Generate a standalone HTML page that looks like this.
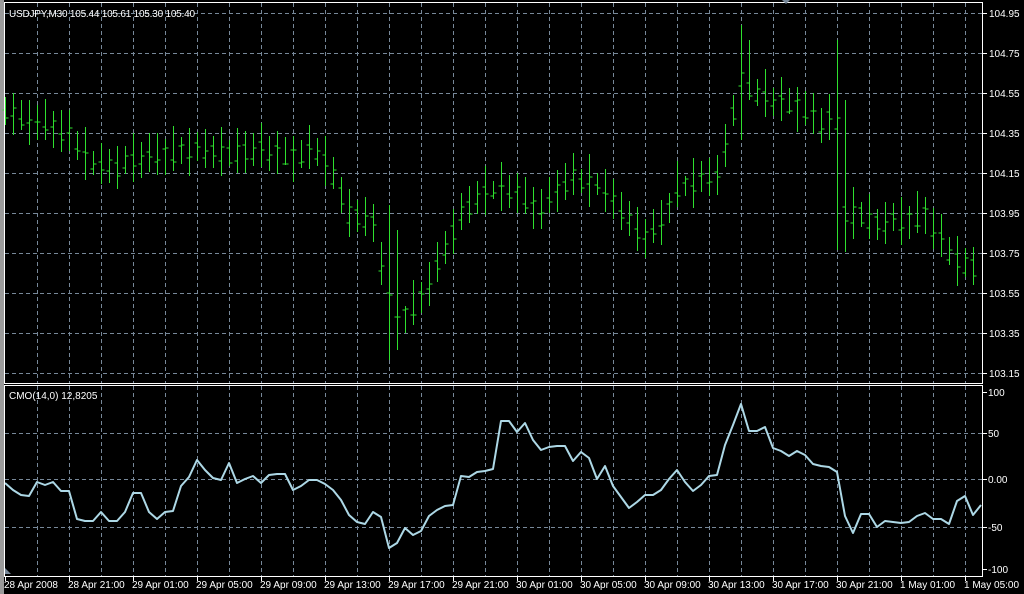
<!DOCTYPE html>
<html><head><meta charset="utf-8"><style>
html,body{margin:0;padding:0;background:#000;width:1024px;height:594px;overflow:hidden}
svg{display:block}
text{font-family:"Liberation Sans",sans-serif;font-size:10px;fill:#fff}
</style></head><body>
<svg id="s" width="1024" height="594" xmlns="http://www.w3.org/2000/svg">
<rect x="0" y="0" width="1024" height="594" fill="#000"/>
<rect x="0" y="0" width="4" height="594" fill="#9a9a9a"/>
<g id="grid" stroke="#778899" stroke-width="1" stroke-dasharray="4,3" fill="none"></g>
<g id="bars" stroke="#2ee02e" stroke-width="1" fill="none" shape-rendering="crispEdges"></g>
<polyline id="cmo" fill="none" stroke="#add8e6" stroke-width="2" stroke-linejoin="round"/>
<g stroke="#fff" stroke-width="1" fill="none">
<path d="M4.5 2.5H982.5V383.5H4.5Z"/>
<path d="M4.5 385.5H982.5V576.5H4.5Z"/>
</g>
<g id="ticks" stroke="#fff" stroke-width="1"></g>
<g id="labels"></g>
<text x="9" y="17" textLength="186">USDJPY,M30  105.44 105.61 105.30 105.40</text>
<text x="9" y="399">CMO(14,0) 12,8205</text>
<path d="M5 568L11 574H5Z" fill="#778899"/>
<path d="M782 0H790L786 4Z" fill="#778899"/>
</svg>
<script>
var NS="http://www.w3.org/2000/svg";
function el(p,t,a,txt){var e=document.createElementNS(NS,t);for(var k in a)e.setAttribute(k,a[k]);if(txt)e.textContent=txt;p.appendChild(e);return e;}
var g=document.getElementById('grid'),b=document.getElementById('bars'),tk=document.getElementById('ticks'),lb=document.getElementById('labels');
var d="";
for(var x=37;x<982;x+=32){d+="M"+(x+.5)+" 3V383M"+(x+.5)+" 386V576";}
for(var y=13;y<=373;y+=40){d+="M5 "+(y+.5)+"H982";}
[433,479,527].forEach(function(y){d+="M5 "+(y+.5)+"H982";});
el(g,'path',{d:d});
var prices=["104.95","104.75","104.55","104.35","104.15","103.95","103.75","103.55","103.35","103.15"];
var td="";
prices.forEach(function(p,i){var y=13+40*i;td+="M983 "+(y+.5)+"H987";el(lb,'text',{x:989,y:y+4},p);});
[[392,"100"],[433,"50"],[479,"0.00"],[527,"-50"],[569,"-100"]].forEach(function(a){td+="M983 "+(a[0]+.5)+"H987";el(lb,'text',{x:988,y:a[0]+4},a[1]);});
var tl=["28 Apr 2008","28 Apr 21:00","29 Apr 01:00","29 Apr 05:00","29 Apr 09:00","29 Apr 13:00","29 Apr 17:00","29 Apr 21:00","30 Apr 01:00","30 Apr 05:00","30 Apr 09:00","30 Apr 13:00","30 Apr 17:00","30 Apr 21:00","1 May 01:00","1 May 05:00"];
tl.forEach(function(t,i){var x=5+64*i;td+="M"+(x+.5)+" 577V581";el(lb,'text',{x:x-1,y:588},t);});
el(tk,'path',{d:td});
var kp=[[5,110],[21,120],[45,125],[69,135],[93,165],[117,168],[133,160],[165,155],[197,150],[229,155],[261,150],[293,158],[317,150],[333,175],[349,215],[373,222],[389,300],[405,318],[421,300],[437,268],[461,215],[485,192],[509,190],[525,200],[541,212],[557,190],[573,178],[597,185],[613,200],[629,222],[645,238],[661,225],[677,190],[701,180],[717,178],[725,150],[733,115],[741,80],[757,95],[773,100],[789,105],[805,110],[821,125],[837,115],[845,215],[861,215],[877,225],[893,222],[909,222],[925,215],[941,240],[957,262],[973,268]];
function mid(x){for(var i=0;i<kp.length-1;i++){if(x<=kp[i+1][0]){var a=kp[i],c=kp[i+1];return a[1]+(c[1]-a[1])*(x-a[0])/(c[0]-a[0]);}}return kp[kp.length-1][1];}
var special={48:[205,360],49:[230,350],92:[25,140],93:[40,100],104:[40,250],105:[100,252]};
var bd="";
for(var i=0;i<122;i++){
 var x=5+8*i+.5,m=mid(x);
 var r=24+22*Math.abs(Math.sin(i*1.7));
 var h=m-r*0.55+4*Math.sin(i*2.3),l=m+r*0.45+4*Math.cos(i*1.9);
 if(special[i]){h=special[i][0];l=special[i][1];}
 var o=m+8*Math.sin(i*3.1),c=m+8*Math.cos(i*2.7);
 o=Math.min(Math.max(o,h),l);c=Math.min(Math.max(c,h),l);
 bd+="M"+x+" "+h.toFixed(0)+"V"+l.toFixed(0)+"M"+(x-3)+" "+o.toFixed(0)+"H"+x+"M"+x+" "+c.toFixed(0)+"H"+(x+3);
}
el(b,'path',{d:bd});
var cy=[483,490,495,496,482,485,482,491,491,519,521,521,512,521,521,512,493,493,512,519,512,511,486,477,460,470,478,480,463,483,479,476,483,475,474,474,490,486,480,480,484,490,500,515,522,524,512,517,548,543,528,535,531,516,510,506,505,476,477,472,471,469,421,421,432,423,440,450,447,446,446,461,452,458,479,466,486,497,508,502,495,495,490,479,470,482,491,485,476,475,445,425,404,431,431,427,448,451,456,451,455,464,466,467,472,516,533,514,514,527,521,522,523,522,516,513,519,519,524,501,496,515,505];
var pts=cy.map(function(v,i){return (5+8*i)+","+v;}).join(" ");
document.getElementById('cmo').setAttribute('points',pts);
</script>
</body></html>
